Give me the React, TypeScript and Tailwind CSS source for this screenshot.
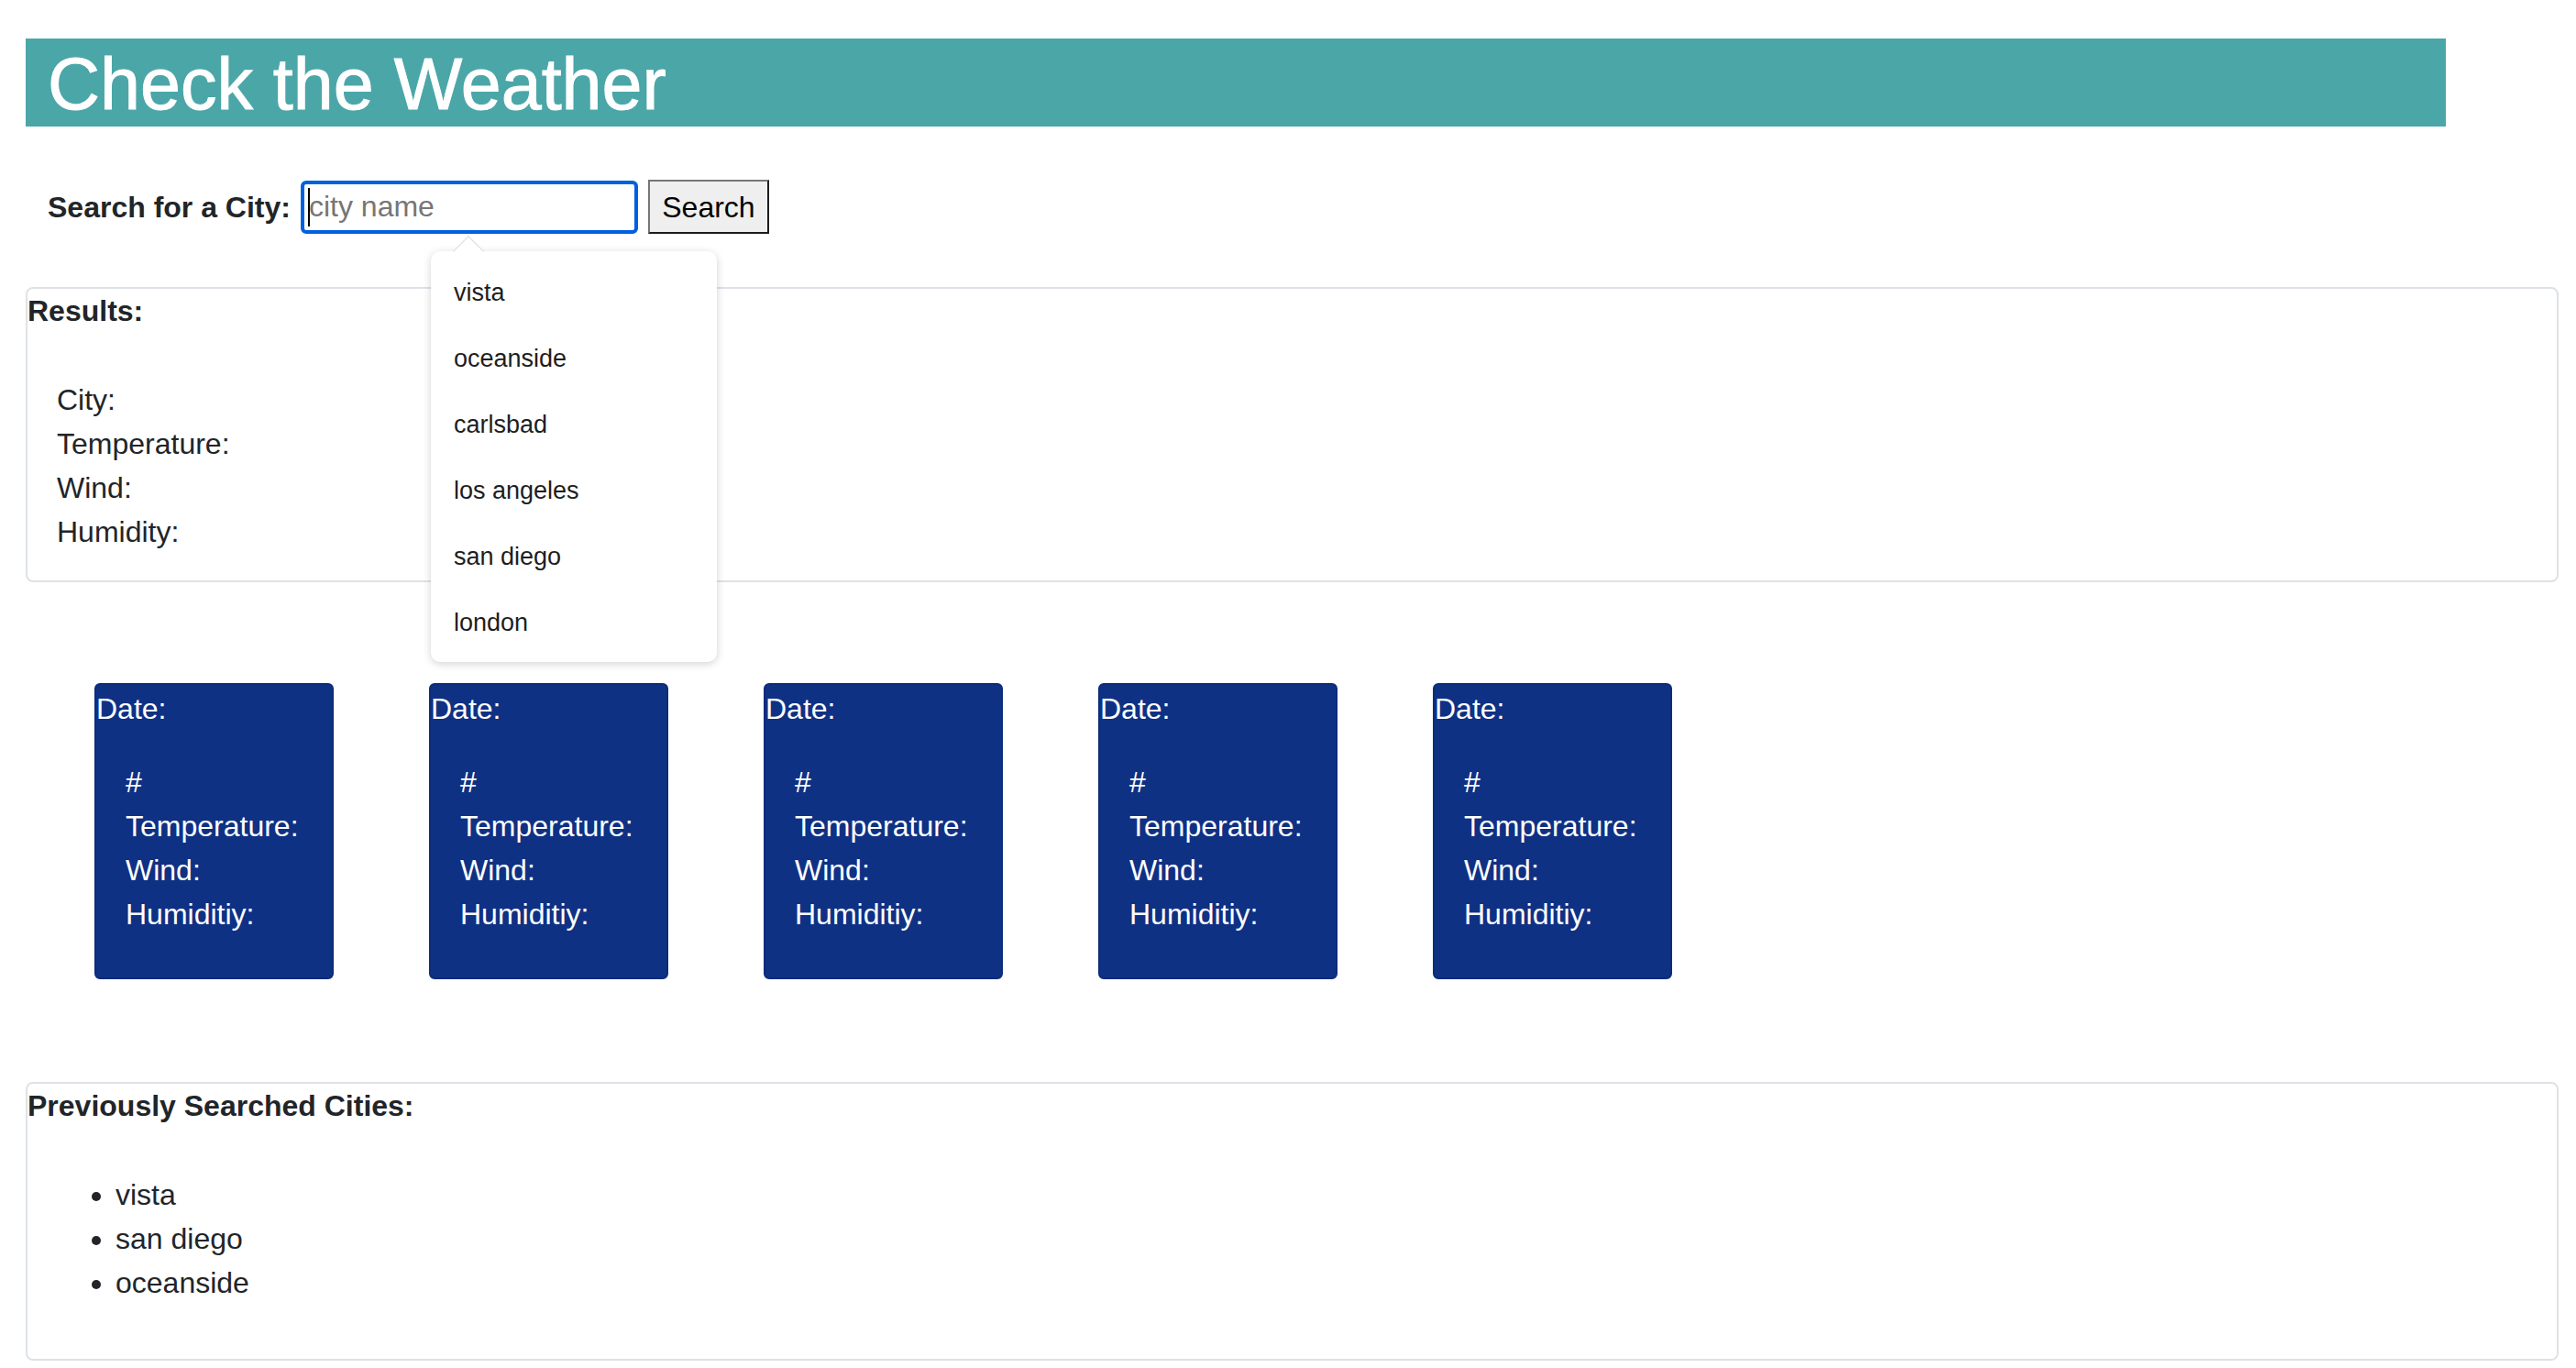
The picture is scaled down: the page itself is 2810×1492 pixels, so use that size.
const suggestions = ["vista", "oceanside", "carlsbad", "los angeles", "san diego", "london"];
const history = ["vista", "san diego", "oceanside"];

function ForecastCard() {
  return (
    <div className="w-[261px] h-[323px] bg-[#0f3184] border-2 border-[#0d2c78] rounded-[6px] text-white pt-[2px]">
      <p className="leading-[48px]">Date:</p>
      <ul className="mt-[32px] pl-[32px]">
        <li className="leading-[48px]">#</li>
        <li className="leading-[48px]">Temperature:</li>
        <li className="leading-[48px]">Wind:</li>
        <li className="leading-[48px]">Humiditiy:</li>
      </ul>
    </div>
  );
}

export default function App() {
  return (
    <div
      className="min-h-screen bg-white text-[#212529] text-[32px] pt-[42px] pb-[8px]"
      style={{ fontFamily: '"Liberation Sans", Arial, sans-serif' }}
    >
      <header className="ml-[28px] w-[2640px] h-[96px] bg-[#4ba6a8] pl-[24px] pt-[2px]">
        <h1 className="text-[79px] leading-[96px] text-white [-webkit-text-stroke:1px_white]">
          Check the Weather
        </h1>
      </header>

      <div className="relative mt-[58px] flex items-center pl-[52px]">
        <label htmlFor="city" className="font-bold leading-[48px]">
          Search for a City:
        </label>
        <div className="relative ml-[11px]">
          <input
            id="city"
            type="text"
            placeholder="city name"
            className="w-[368px] h-[58px] border-[4px] border-[#0060df] rounded-[6px] pl-[5px] text-[32px] placeholder:text-[#767676] outline-none"
          />
          <span className="absolute left-[8px] top-[8px] w-[2px] h-[42px] bg-black" />
        </div>
        <button className="ml-[11px] w-[132px] h-[59px] bg-[#efefef] border-2 border-t-[#767676] border-l-[#767676] border-b-[#1c1c1c] border-r-[#1c1c1c] text-black text-[32px]">
          Search
        </button>

        <div className="absolute left-[470px] top-[78px] w-[312px] h-[448px] bg-white rounded-[10px] shadow-[0_2px_10px_rgba(0,0,0,0.18)] z-10 pt-[9px]">
          <span className="absolute left-[29px] -top-[12px] w-[24px] h-[24px] bg-white border-t border-l border-[#dcdcdc] rotate-45" />
          <ul className="relative">
            {suggestions.map((s) => (
              <li key={s} className="pl-[25px] text-[27px] leading-[72px] text-[#1e1e1e]">
                {s}
              </li>
            ))}
          </ul>
        </div>
      </div>

      <section className="mt-[58px] ml-[28px] w-[2763px] border-2 border-[#dee2e6] rounded-[8px]">
        <h2 className="font-bold leading-[48px]">Results:</h2>
        <ul className="mt-[49px] mb-[29px] pl-[32px]">
          <li className="leading-[48px]">City:</li>
          <li className="leading-[48px]">Temperature:</li>
          <li className="leading-[48px]">Wind:</li>
          <li className="leading-[48px]">Humidity:</li>
        </ul>
      </section>

      <div className="mt-[110px] flex gap-[104px] pl-[103px]">
        <ForecastCard />
        <ForecastCard />
        <ForecastCard />
        <ForecastCard />
        <ForecastCard />
      </div>

      <section className="mt-[112px] ml-[28px] w-[2763px] border-2 border-[#dee2e6] rounded-[8px]">
        <h2 className="font-bold leading-[48px]">Previously Searched Cities:</h2>
        <ul className="mt-[49px] mb-[59px] pl-[96px] list-disc">
          {history.map((c) => (
            <li key={c} className="leading-[48px]">
              {c}
            </li>
          ))}
        </ul>
      </section>
    </div>
  );
}
